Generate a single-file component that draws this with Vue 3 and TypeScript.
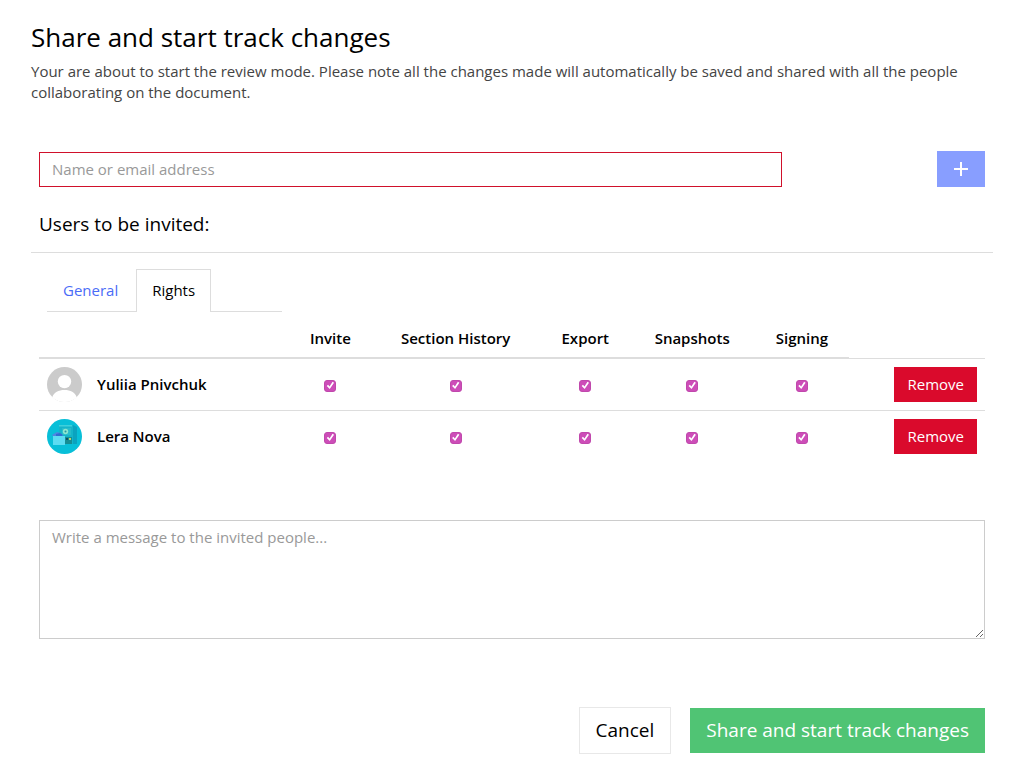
<script setup lang="ts">
import { ref } from 'vue'

interface Right {
  key: string
  label: string
}

interface User {
  id: number
  name: string
  avatar: 'default' | 'picture'
  rights: Record<string, boolean>
}

const rightList: Right[] = [
  { key: 'invite', label: 'Invite' },
  { key: 'history', label: 'Section History' },
  { key: 'export', label: 'Export' },
  { key: 'snapshots', label: 'Snapshots' },
  { key: 'signing', label: 'Signing' },
]

const allRights = (): Record<string, boolean> =>
  Object.fromEntries(rightList.map((r) => [r.key, true]))

const users = ref<User[]>([
  { id: 1, name: 'Yuliia Pnivchuk', avatar: 'default', rights: allRights() },
  { id: 2, name: 'Lera Nova', avatar: 'picture', rights: allRights() },
])

const tabs = ['General', 'Rights']
const activeTab = ref('Rights')
const search = ref('')
const message = ref('')

function removeUser(id: number): void {
  users.value = users.value.filter((u) => u.id !== id)
}
</script>

<template>
  <main class="dialog">
    <header>
      <h1>Share and start track changes</h1>
      <p class="intro">
        Your are about to start the review mode. Please note all the changes made will automatically
        be saved and shared with all the people collaborating on the document.
      </p>
    </header>

    <form class="add" @submit.prevent>
      <input v-model="search" class="search" type="text" placeholder="Name or email address" aria-label="Name or email address" />
      <button class="plus" type="submit" aria-label="Add user">
        <svg width="14" height="14" viewBox="0 0 14 14" aria-hidden="true">
          <path d="M6 0h2v6h6v2H8v6H6V8H0V6h6z" fill="#fff" />
        </svg>
      </button>
    </form>

    <h2>Users to be invited:</h2>

    <section class="users">
      <div class="tabs" role="tablist">
        <button
          v-for="tab in tabs"
          :key="tab"
          class="tab"
          :class="{ active: tab === activeTab }"
          type="button"
          role="tab"
          :aria-selected="tab === activeTab"
          @click="activeTab = tab"
        >{{ tab }}</button>
      </div>

      <table>
        <colgroup>
          <col class="c-user" />
          <col class="c-invite" />
          <col class="c-history" />
          <col class="c-export" />
          <col class="c-snapshots" />
          <col class="c-signing" />
          <col />
        </colgroup>
        <thead>
          <tr>
            <th></th>
            <th v-for="r in rightList" :key="r.key" scope="col">{{ r.label }}</th>
            <td class="blank"></td>
          </tr>
        </thead>
        <tbody>
          <tr v-for="u in users" :key="u.id">
            <td>
              <div class="user">
                <svg v-if="u.avatar === 'default'" class="avatar" viewBox="0 0 35 35" aria-hidden="true">
                  <circle cx="17.5" cy="17.5" r="17.5" fill="#cbcbcb" />
                  <circle cx="17.5" cy="14.6" r="6.7" fill="#fff" />
                  <path d="M5.2 30.2C7 25.5 11.5 23 17.5 23s10.5 2.5 12.3 7.2A17.5 17.5 0 0 1 17.5 35 17.5 17.5 0 0 1 5.2 30.2z" fill="#fff" />
                </svg>
                <svg v-else class="avatar" viewBox="0 0 35 35" aria-hidden="true">
                  <circle cx="17.5" cy="17.5" r="17.5" fill="#08bfd8" />
                  <path d="M12 6h14v19H12z" fill="#14b4c9" />
                  <path d="M26 6l4 2v17h-4z" fill="#0aa3bf" />
                  <path d="M12 6h13v1.500H12z" fill="#3ed0dc" />
                  <path d="M15 9h9v7h-9z" fill="#26bccb" />
                  <circle cx="18.500" cy="12.500" r="2.700" fill="#8be6cf" />
                  <circle cx="18.500" cy="12.500" r="1" fill="#2a94a4" />
                  <path d="M5 16l5-3 3 1 3 3H6z" fill="#4f86e2" />
                  <path d="M9 15l4-1 3 2-3 2H9z" fill="#2f6ed0" />
                  <path d="M6 17h12v9H6z" fill="#5cdcf2" />
                  <path d="M18 18h7v7h-7z" fill="#158d94" />
                  <path d="M19 19h2v2h-2z" fill="#114f63" />
                  <path d="M22 19h2v2h-2z" fill="#b9d66f" />
                </svg>
                <span>{{ u.name }}</span>
              </div>
            </td>
            <td v-for="r in rightList" :key="r.key" class="center">
              <input v-model="u.rights[r.key]" class="check" type="checkbox" :aria-label="`${r.label}: ${u.name}`" />
            </td>
            <td class="action">
              <button class="remove" type="button" @click="removeUser(u.id)">Remove</button>
            </td>
          </tr>
        </tbody>
      </table>

      <textarea v-model="message" placeholder="Write a message to the invited people..." aria-label="Message to the invited people"></textarea>
    </section>

    <footer>
      <button class="cancel" type="button">Cancel</button>
      <button class="share" type="button">Share and start track changes</button>
    </footer>
  </main>
</template>

<style>
body {
  margin: 0;
  background: #fff;
}
</style>

<style scoped>
.dialog,
.dialog * {
  box-sizing: border-box;
}

.dialog {
  padding: 19px 40px 19px 31px;
  font: 15px/21px "Open Sans", "Noto Sans", sans-serif;
  color: #000;
}

button,
input,
textarea {
  font: inherit;
  color: inherit;
  margin: 0;
  border-radius: 0;
}

button {
  border: 0;
  cursor: pointer;
}

h1 {
  margin: 0;
  font-size: 26px;
  line-height: 36px;
  font-weight: 400;
}

.intro {
  margin: 6px 0 0;
  color: #444;
}

.add {
  display: flex;
  align-items: flex-end;
  justify-content: space-between;
  margin-top: 48px;
  padding: 0 8px;
}

.search {
  width: 743px;
  flex: 0 1 auto;
  height: 35px;
  padding: 0 12px 2px;
  border: 1px solid #d0112b;
  background: #fff;
}

.search::placeholder,
textarea::placeholder {
  color: #999;
  opacity: 1;
}

.plus {
  display: flex;
  align-items: center;
  justify-content: center;
  width: 48px;
  height: 36px;
  padding: 0;
  background: #889eff;
}

h2 {
  margin: 24px 0 0;
  padding: 0 8px 15px;
  border-bottom: 1px solid #ddd;
  font-size: 19px;
  line-height: 26px;
  font-weight: 400;
}

.users {
  padding: 16px 8px 0;
}

.tabs {
  display: flex;
  width: 235px;
  margin-left: 8px;
  box-shadow: inset 0 -1px #ddd;
}

.tab {
  height: 43px;
  padding: 0 15px 2px;
  border: 1px solid transparent;
  border-bottom: 0;
  background: none;
  color: #4a6cf7;
}

.tab + .tab {
  margin-left: 2px;
}

.tab.active {
  border-color: #ddd;
  background: #fff;
  color: #000;
}

table {
  width: 100%;
  table-layout: fixed;
  border-collapse: separate;
  border-spacing: 0;
  margin-top: 8px;
}

.c-user { width: 26.6%; }
.c-invite { width: 8.4%; }
.c-history { width: 18.1%; }
.c-export { width: 9.3%; }
.c-snapshots { width: 13.3%; }
.c-signing { width: 9.9%; }

th {
  padding: 8px 0;
  border-bottom: 2px solid #ddd;
  font-weight: 600;
  text-align: center;
  white-space: nowrap;
}

.blank {
  border-bottom: 1px solid #ddd;
}

tbody td {
  padding: 8px;
  vertical-align: middle;
}

tbody tr + tr td {
  border-top: 1px solid #ddd;
}

.user {
  display: flex;
  align-items: center;
  gap: 15px;
  font-weight: 600;
}

.avatar {
  display: block;
  width: 35px;
  height: 35px;
}

tbody .center {
  padding: 10px 0 8px;
  text-align: center;
}

.check {
  appearance: none;
  display: block;
  width: 12px;
  height: 12px;
  margin: 0 auto;
  border: 1px solid #c048ac;
  border-radius: 3px;
  background: #fff;
}

.check:checked {
  background: #cd4db8;
}

.check:checked::before {
  content: "";
  display: block;
  width: 10px;
  height: 10px;
  background: #fff;
  clip-path: polygon(14% 54%, 27% 43%, 42% 59%, 72% 12%, 87% 23%, 44% 86%);
}

.action {
  text-align: right;
}

.remove {
  display: block;
  height: 35px;
  margin-left: auto;
  padding: 0 13px;
  background: #da0a2c;
  color: #fff;
  font-weight: 500;
}

textarea {
  display: block;
  width: 100%;
  height: 119px;
  margin-top: 58px;
  padding: 6px 12px;
  border: 1px solid #ccc;
  background: #fff;
  resize: vertical;
}

footer {
  display: flex;
  align-items: center;
  justify-content: flex-end;
  gap: 19px;
  margin-top: 68px;
  padding: 0 8px;
  font-size: 19px;
}

.cancel {
  height: 47px;
  padding: 0 16px;
  border: 1px solid #e8e8e8;
  background: #fff;
}

.share {
  height: 45px;
  padding: 0 16px;
  background: #50c474;
  color: #fff;
  font-weight: 500;
}
</style>
